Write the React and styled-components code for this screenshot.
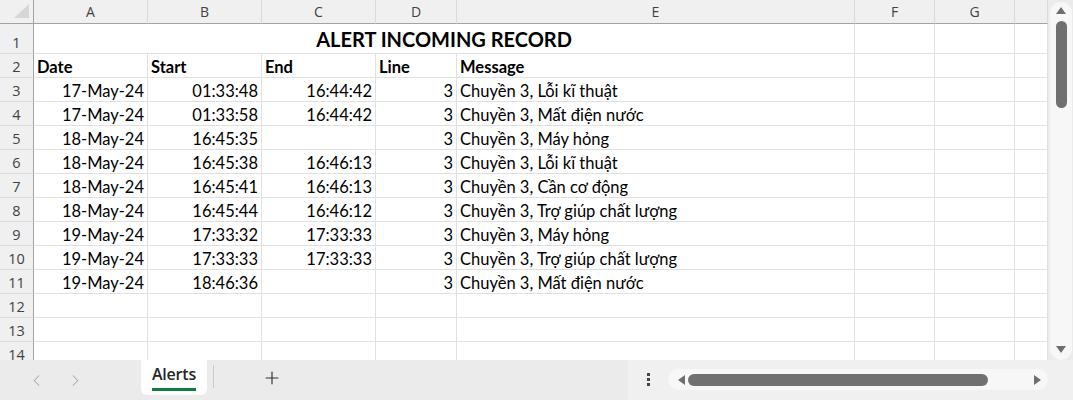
import React from "react";
import styled, { createGlobalStyle } from "styled-components";
import { ChevronLeft, ChevronRight, Plus } from "lucide-react";

const GlobalStyle = createGlobalStyle`
  html, body {
    margin: 0;
    padding: 0;
    background: #fff;
  }
  body {
    font-family: Lato, "Noto Sans", sans-serif;
  }
`;

const COLS = ["A", "B", "C", "D", "E", "F", "G", ""];

const ROWS = [
  ["17-May-24", "01:33:48", "16:44:42", "3", "Chuyền 3, Lỗi kĩ thuật"],
  ["17-May-24", "01:33:58", "16:44:42", "3", "Chuyền 3, Mất điện nước"],
  ["18-May-24", "16:45:35", "", "3", "Chuyền 3, Máy hỏng"],
  ["18-May-24", "16:45:38", "16:46:13", "3", "Chuyền 3, Lỗi kĩ thuật"],
  ["18-May-24", "16:45:41", "16:46:13", "3", "Chuyền 3, Cần cơ động"],
  ["18-May-24", "16:45:44", "16:46:12", "3", "Chuyền 3, Trợ giúp chất lượng"],
  ["19-May-24", "17:33:32", "17:33:33", "3", "Chuyền 3, Máy hỏng"],
  ["19-May-24", "17:33:33", "17:33:33", "3", "Chuyền 3, Trợ giúp chất lượng"],
  ["19-May-24", "18:46:36", "", "3", "Chuyền 3, Mất điện nước"],
];

const HEADINGS = ["Date", "Start", "End", "Line", "Message"];

export default function App() {
  return (
    <>
      <GlobalStyle />
      <Window>
        <Main>
          <Sheet>
            <Corner>
              <svg width="34" height="24">
                <polygon points="30,5 30,19 15,19" fill="#d6d6d6" />
              </svg>
            </Corner>
            {COLS.map((c, i) => (
              <ColHeader key={i}>{c}</ColHeader>
            ))}

            <RowHeader>1</RowHeader>
            <TitleCell>ALERT INCOMING RECORD</TitleCell>
            <Cell />
            <Cell />
            <Cell />

            <RowHeader>2</RowHeader>
            {HEADINGS.map(h => (
              <Cell key={h} $bold>
                {h}
              </Cell>
            ))}
            <Cell />
            <Cell />
            <Cell />

            {ROWS.map((r, i) => (
              <React.Fragment key={i}>
                <RowHeader>{i + 3}</RowHeader>
                <Cell $right>{r[0]}</Cell>
                <Cell $right>{r[1]}</Cell>
                <Cell $right>{r[2]}</Cell>
                <Cell $right>{r[3]}</Cell>
                <Cell>{r[4]}</Cell>
                <Cell />
                <Cell />
                <Cell />
              </React.Fragment>
            ))}

            {[12, 13, 14].map(n => (
              <React.Fragment key={n}>
                <RowHeader>{n}</RowHeader>
                {COLS.map((c, i) => (
                  <Cell key={i} />
                ))}
              </React.Fragment>
            ))}
          </Sheet>

          <VScroll>
            <VTrack>
              <svg width="12" height="9">
                <polygon points="6,1 11,8 1,8" fill="#6f6f6f" />
              </svg>
              <VThumb />
              <VSpacer />
              <svg width="12" height="9">
                <polygon points="1,1 11,1 6,8" fill="#6f6f6f" />
              </svg>
            </VTrack>
          </VScroll>
        </Main>

        <TabBar>
          <NavButtons>
            <ChevronLeft size={19} strokeWidth={1.3} color="#a6a6a6" />
            <ChevronRight size={19} strokeWidth={1.3} color="#a6a6a6" />
          </NavButtons>
          <Tab>
            <TabLabel>Alerts</TabLabel>
          </Tab>
          <TabDivider />
          <AddButton>
            <Plus size={20} strokeWidth={1.4} color="#333" />
          </AddButton>
          <Filler />
          <ScrollArea>
            <Dots>
              <i />
              <i />
              <i />
            </Dots>
            <HTrack>
              <svg width="9" height="12">
                <polygon points="1,6 8,1 8,11" fill="#6f6f6f" />
              </svg>
              <HThumb />
              <svg width="9" height="12">
                <polygon points="1,1 8,6 1,11" fill="#6f6f6f" />
              </svg>
            </HTrack>
          </ScrollArea>
        </TabBar>
      </Window>
    </>
  );
}

const Window = styled.div`
  width: 1073px;
  height: 400px;
  display: flex;
  flex-direction: column;
  overflow: hidden;
  background: #ebebeb;
`;

const Main = styled.div`
  display: flex;
  height: 360px;
`;

const Sheet = styled.div`
  width: 1048px;
  height: 360px;
  overflow: hidden;
  background: #fff;
  display: grid;
  grid-template-columns: 34px 114px 114px 114px 81px 398px 80px 80px 33px;
  grid-auto-rows: 24px;
  grid-template-rows: 24px 30px;
  align-content: start;
`;

const headerFont = `
  font-family: "Open Sans", "Noto Sans", sans-serif;
  font-size: 14px;
  color: #424242;
`;

const Corner = styled.div`
  background: #f0f0f0;
  border-right: 1px solid #a3a3a3;
  border-bottom: 1px solid #a3a3a3;
  box-sizing: border-box;
  svg {
    display: block;
    margin: -1px 0 0 -1px;
  }
`;

const ColHeader = styled.div`
  ${headerFont}
  background: #f0f0f0;
  border-right: 1px solid #dadada;
  border-bottom: 1px solid #a3a3a3;
  box-sizing: border-box;
  display: flex;
  align-items: center;
  justify-content: center;
  padding-bottom: 1px;
`;

const RowHeader = styled.div`
  ${headerFont}
  font-size: 14.5px;
  background: #f0f0f0;
  border-right: 1px solid #a3a3a3;
  border-bottom: 1px solid #dadada;
  box-sizing: border-box;
  display: flex;
  align-items: flex-end;
  justify-content: center;
  padding-bottom: 1px;
`;

const Cell = styled.div`
  font-family: Lato, "Noto Sans", sans-serif;
  font-size: 16.5px;
  font-weight: ${p => (p.$bold ? 700 : 400)};
  color: #000;
  border-right: 1px solid #e1e1e1;
  border-bottom: 1px solid #e1e1e1;
  box-sizing: border-box;
  display: flex;
  align-items: flex-end;
  justify-content: ${p => (p.$right ? "flex-end" : "flex-start")};
  padding: 0 3px 0 3px;
  line-height: 20px;
  white-space: nowrap;
  min-width: 0;
`;

const TitleCell = styled(Cell)`
  grid-column: span 5;
  justify-content: center;
  font-size: 20px;
  font-weight: 700;
  line-height: 24px;
  padding-bottom: 2px;
`;

const VScroll = styled.div`
  flex: 1;
  display: flex;
  background: #ebebeb;
  padding: 2px 1px 0 2px;
`;

const VTrack = styled.div`
  flex: 1;
  background: #f7f7f7;
  border-radius: 11px;
  display: flex;
  flex-direction: column;
  align-items: center;
  padding: 4px 0 6px;
  svg {
    flex: none;
  }
`;

const VThumb = styled.div`
  width: 11px;
  height: 87px;
  margin-top: 6px;
  border-radius: 6px;
  background: #707070;
`;

const VSpacer = styled.div`
  flex: 1;
`;

const TabBar = styled.div`
  flex: 1;
  display: flex;
  align-items: stretch;
  background: #ebebeb;
`;

const NavButtons = styled.div`
  width: 141px;
  display: flex;
  align-items: center;
  gap: 20px;
  padding-left: 27px;
  box-sizing: border-box;
`;

const Tab = styled.div`
  width: 66px;
  height: 35px;
  background: #fff;
  border-radius: 0 0 6px 6px;
  display: flex;
  justify-content: center;
  align-items: flex-start;
`;

const TabLabel = styled.span`
  font-family: "Open Sans", "Noto Sans", sans-serif;
  font-size: 16px;
  font-weight: 600;
  color: #262626;
  padding-top: 5px;
  padding-bottom: 4px;
  border-bottom: 3px solid #107c41;
  line-height: 19px;
  letter-spacing: -0.2px;
`;

const TabDivider = styled.div`
  width: 1px;
  background: #c9c9c9;
  margin: 5px 0 12px 6px;
`;

const AddButton = styled.div`
  width: 42px;
  margin-left: 48px;
  display: flex;
  align-items: center;
  padding-bottom: 4px;
`;

const Filler = styled.div`
  width: 324px;
`;

const ScrollArea = styled.div`
  flex: 1;
  display: flex;
  align-items: flex-start;
  background: #f0f0f0;
  padding: 9px 25px 0 0;
`;

const Dots = styled.div`
  width: 40px;
  height: 21px;
  display: flex;
  flex-direction: column;
  align-items: center;
  justify-content: center;
  gap: 2px;
  i {
    display: block;
    width: 3px;
    height: 3px;
    background: #444;
  }
`;

const HTrack = styled.div`
  flex: 1;
  height: 21px;
  background: #f7f7f7;
  border-radius: 11px;
  display: flex;
  align-items: center;
  padding: 0 6px 0 9px;
  svg {
    flex: none;
  }
`;

const HThumb = styled.div`
  width: 300px;
  height: 12px;
  margin-left: 2px;
  margin-right: auto;
  border-radius: 6px;
  background: #707070;
`;
